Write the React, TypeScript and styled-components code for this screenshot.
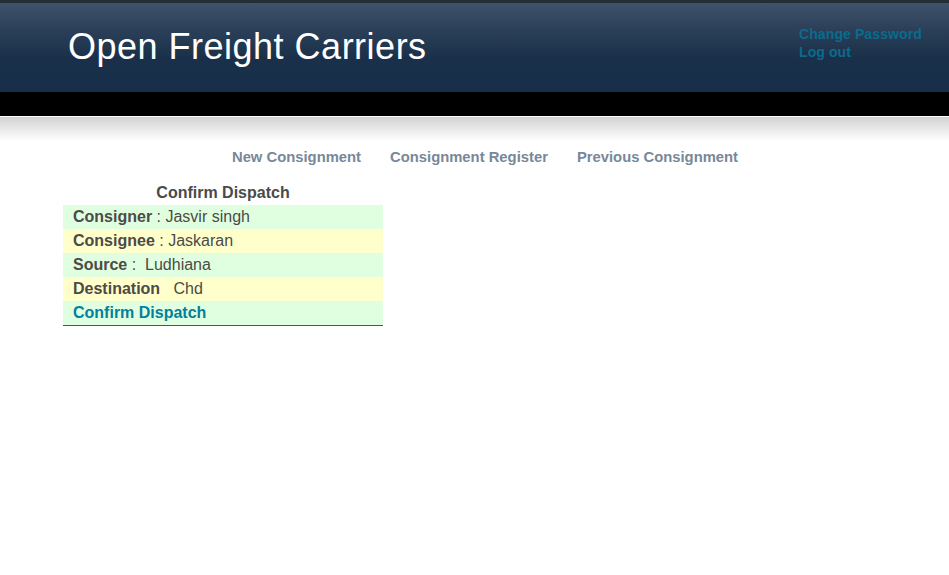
import React from "react";
import styled, { createGlobalStyle } from "styled-components";

const Global = createGlobalStyle`
  html, body { margin: 0; padding: 0; background: #fff; }
  body { font-family: "Liberation Sans", Arial, sans-serif; }
`;

const Header = styled.header`
  height: 89px;
  border-top: 3px solid #252d36;
  background: linear-gradient(to bottom, #3f536b 0%, #2b3f58 30%, #1a304a 62%, #172f4a 100%);
  display: flex;
  justify-content: space-between;
  align-items: flex-start;
`;

const Title = styled.h1`
  margin: 0;
  padding: 23px 0 0 68px;
  font-family: "Liberation Sans", Arial, sans-serif;
  font-weight: normal;
  font-size: 36px;
  line-height: 42px;
  letter-spacing: 0.5px;
  color: #ffffff;
`;

const UserLinks = styled.div`
  display: flex;
  flex-direction: column;
  width: 150px;
  padding-top: 22px;
`;

const UserLink = styled.a`
  font-size: 14px;
  font-weight: bold;
  line-height: 18px;
  color: #0b6b8c;
  text-decoration: none;
  letter-spacing: 0.1px;
`;

const BlackBar = styled.div`
  height: 24px;
  background: #000;
  border-bottom: 1px solid #ffffff;
`;

const Shade = styled.div`
  height: 24px;
  background: linear-gradient(to bottom, #d3d3d3 0%, #f4f4f4 75%, #ffffff 100%);
`;

const Nav = styled.nav`
  display: flex;
  justify-content: center;
  gap: 29px;
  padding: 7px 0 0 21px;
  height: 26px;
`;

const NavLink = styled.a`
  font-size: 14.8px;
  font-weight: bold;
  line-height: 18px;
  color: #778899;
  text-decoration: none;
`;

const Panel = styled.div`
  width: 320px;
  margin: 7px 0 0 63px;
  border-bottom: 1px solid #1f6780;
`;

const PanelTitle = styled.div`
  text-align: center;
  font-size: 16px;
  font-weight: bold;
  line-height: 24px;
  color: #4a4a4a;
`;

const Row = styled.div<{ $tone: "green" | "yellow" }>`
  height: 24px;
  line-height: 24px;
  padding-left: 10px;
  font-size: 16px;
  color: #4d4a47;
  background: ${(p) => (p.$tone === "green" ? "#e0ffe0" : "#ffffcc")};
  white-space: pre;
`;

const Label = styled.b`
  font-weight: bold;
`;

const ActionLink = styled.a`
  font-weight: bold;
  color: #02809c;
  text-decoration: none;
`;

export default function App() {
  return (
    <>
      <Global />
      <Header>
        <Title>Open Freight Carriers</Title>
        <UserLinks>
          <UserLink href="#">Change Password</UserLink>
          <UserLink href="#">Log out</UserLink>
        </UserLinks>
      </Header>
      <BlackBar />
      <Shade />
      <Nav>
        <NavLink href="#">New Consignment</NavLink>
        <NavLink href="#">Consignment Register</NavLink>
        <NavLink href="#">Previous Consignment</NavLink>
      </Nav>
      <Panel>
        <PanelTitle>Confirm Dispatch</PanelTitle>
        <Row $tone="green">
          <Label>Consigner</Label> : Jasvir singh
        </Row>
        <Row $tone="yellow">
          <Label>Consignee</Label> : Jaskaran
        </Row>
        <Row $tone="green">
          <Label>Source</Label> :  Ludhiana
        </Row>
        <Row $tone="yellow">
          <Label>Destination</Label>   Chd
        </Row>
        <Row $tone="green">
          <ActionLink href="#">Confirm Dispatch</ActionLink>
        </Row>
      </Panel>
    </>
  );
}
